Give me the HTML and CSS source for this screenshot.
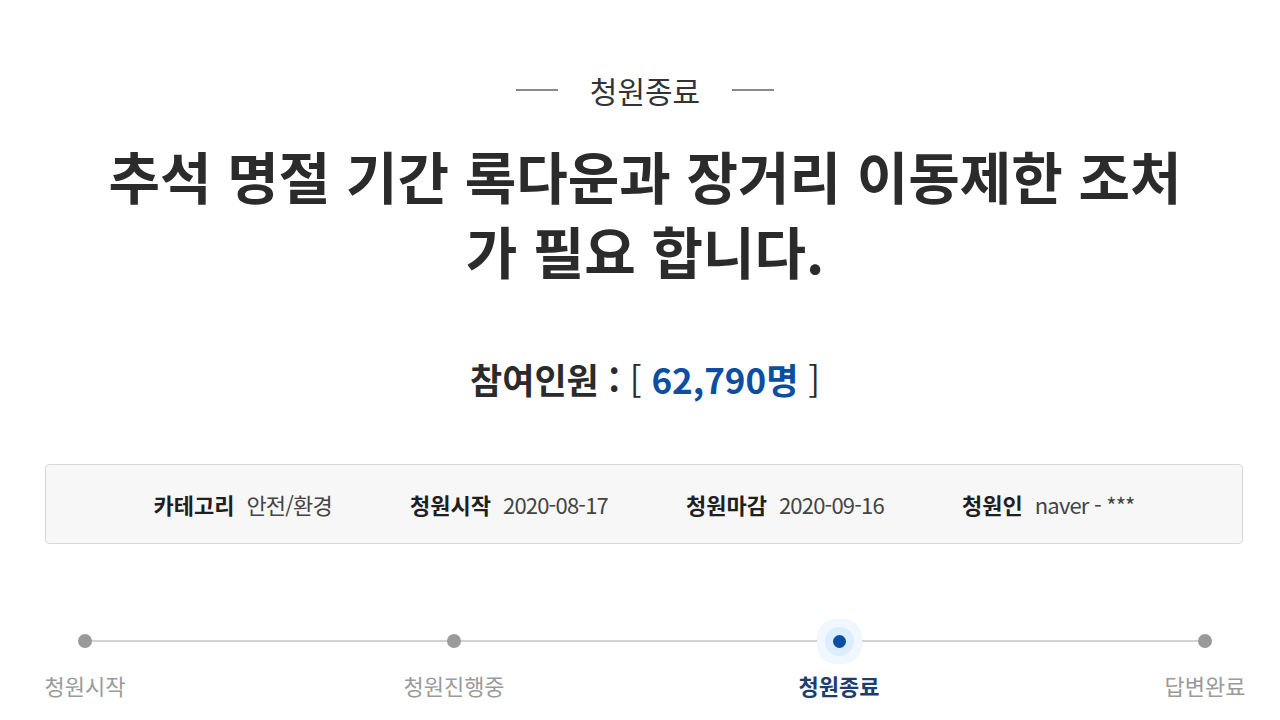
FILE: index.html
```html
<!DOCTYPE html>
<html lang="ko">
<head>
<meta charset="utf-8">
<title>청원종료</title>
<link rel="stylesheet" href="styles.css">
</head>
<body>
<div class="page">
  <div class="status-head">
    <span class="rule"></span>
    <span class="status-text">청원종료</span>
    <span class="rule"></span>
  </div>
  <h1 class="title">추석 명절 기간 록다운과 장거리 이동제한 조처가 필요 합니다.</h1>
  <div class="count">참여인원 : <span class="bracket">[</span> <span class="num">62,790명</span> <span class="bracket">]</span></div>
  <div class="info">
    <div class="info-item"><span class="label">카테고리</span><span class="value">안전/환경</span></div>
    <div class="info-item"><span class="label">청원시작</span><span class="value">2020-08-17</span></div>
    <div class="info-item"><span class="label">청원마감</span><span class="value">2020-09-16</span></div>
    <div class="info-item"><span class="label">청원인</span><span class="value">naver - ***</span></div>
  </div>
  <div class="steps">
    <div class="step s1"><div class="dot-wrap"><span class="dot"></span></div><span class="step-label">청원시작</span></div>
    <div class="step s2"><div class="dot-wrap"><span class="dot"></span></div><span class="step-label">청원진행중</span></div>
    <div class="step s3 active"><div class="dot-wrap"><span class="dot"></span></div><span class="step-label">청원종료</span></div>
    <div class="step s4"><div class="dot-wrap"><span class="dot"></span></div><span class="step-label">답변완료</span></div>
  </div>
</div>
</body>
</html>
```

FILE: styles.css
```css
html, body {
  margin: 0;
  padding: 0;
  background: #ffffff;
}
body {
  font-family: "Noto Sans CJK KR", "Noto Sans", sans-serif;
  color: #2b2b2b;
}
.page {
  width: 1200px;
  padding-left: 45px;
  padding-top: 70px;
}
.status-head {
  display: flex;
  justify-content: center;
  align-items: center;
  gap: 32px;
  height: 40px;
}
.rule {
  width: 42px;
  height: 2px;
  background: #8a8a8a;
}
.status-text {
  font-size: 30px;
  line-height: 40px;
  color: #333;
}
.title {
  margin: 27px auto 0;
  width: 1100px;
  text-align: center;
  font-size: 56px;
  line-height: 75px;
  font-weight: 700;
  color: #2b2b2b;
}
.count {
  margin-top: 67px;
  text-align: center;
  font-size: 35px;
  line-height: 50px;
  font-weight: 700;
  color: #2b2b2b;
}
.bracket {
  font-weight: 400;
}
.num {
  color: #0b4ea2;
}
.info {
  margin-top: 60px;
  width: 1198px;
  height: 80px;
  box-sizing: border-box;
  border: 1px solid #d9d9d9;
  border-radius: 4px;
  background: #f7f7f7;
  display: flex;
  justify-content: center;
  align-items: center;
  gap: 78px;
}
.info-item {
  display: flex;
  align-items: center;
  gap: 12px;
  font-size: 22px;
  line-height: 30px;
}
.label {
  font-weight: 700;
  color: #1f1f1f;
}
.value {
  color: #444;
  letter-spacing: -0.8px;
}
.steps {
  position: relative;
  margin-top: 75px;
  display: grid;
  grid-template-columns: 80px 279px 100px 295px 80px 286px 80px;
}
.steps::before {
  content: "";
  position: absolute;
  top: 21px;
  left: 38px;
  right: 41px;
  height: 2px;
  background: #d2d2d2;
}
.step {
  display: flex;
  flex-direction: column;
  align-items: center;
}
.s1 { grid-column: 1; }
.s2 { grid-column: 3; }
.s3 { grid-column: 5; }
.s4 { grid-column: 7; }
.dot-wrap {
  height: 44px;
  display: flex;
  align-items: center;
  justify-content: center;
  position: relative;
  z-index: 1;
}
.dot {
  width: 14px;
  height: 14px;
  border-radius: 50%;
  background: #9a9a9a;
}
.active .dot {
  width: 13px;
  height: 13px;
  background: #0b4ea2;
  box-shadow: 0 0 0 8px #dcedfd, 0 0 0 16px #f0f7fe;
}
.step-label {
  margin-top: 7px;
  font-size: 22px;
  line-height: 30px;
  color: #9a9a9a;
  white-space: nowrap;
}
.active .step-label {
  font-weight: 700;
  color: #1c3d6e;
}
```
